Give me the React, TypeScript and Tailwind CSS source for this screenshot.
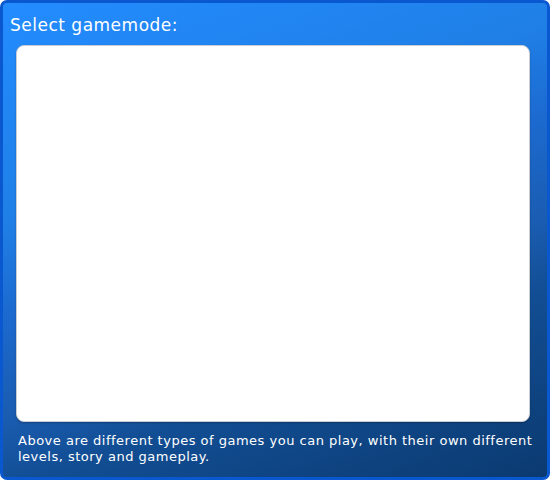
import React from 'react';

export default function App() {
  return (
    <div className="w-[550px] h-[480px] bg-white">
      <div
        className="w-full h-full flex flex-col rounded-[7px] border-[3px] border-[#0a58d0] bg-[linear-gradient(160deg,#238cff_0%,#1f7fe6_33%,#1c6ad0_46%,#1a5cb0_62%,#124e94_72%,#0b3a70_100%)] text-white tracking-[0.5px]"
        style={{ fontFamily: '"DejaVu Sans", Verdana, sans-serif' }}
      >
        <h1 className="pl-[7px] pt-[12px] h-[42px] text-[17px] leading-[20px]">Select gamemode:</h1>
        <div className="ml-[13px] w-[514px] h-[377px] bg-white rounded-[8px] border border-[#c8ccd4] shadow-[0_1px_2px_rgba(0,0,0,0.25)]" />
        <p className="pl-[15px] pr-[8px] pt-[11px] text-[13px] leading-[16px]">
          Above are different types of games you can play, with their own different levels, story and gameplay.
        </p>
      </div>
    </div>
  );
}
